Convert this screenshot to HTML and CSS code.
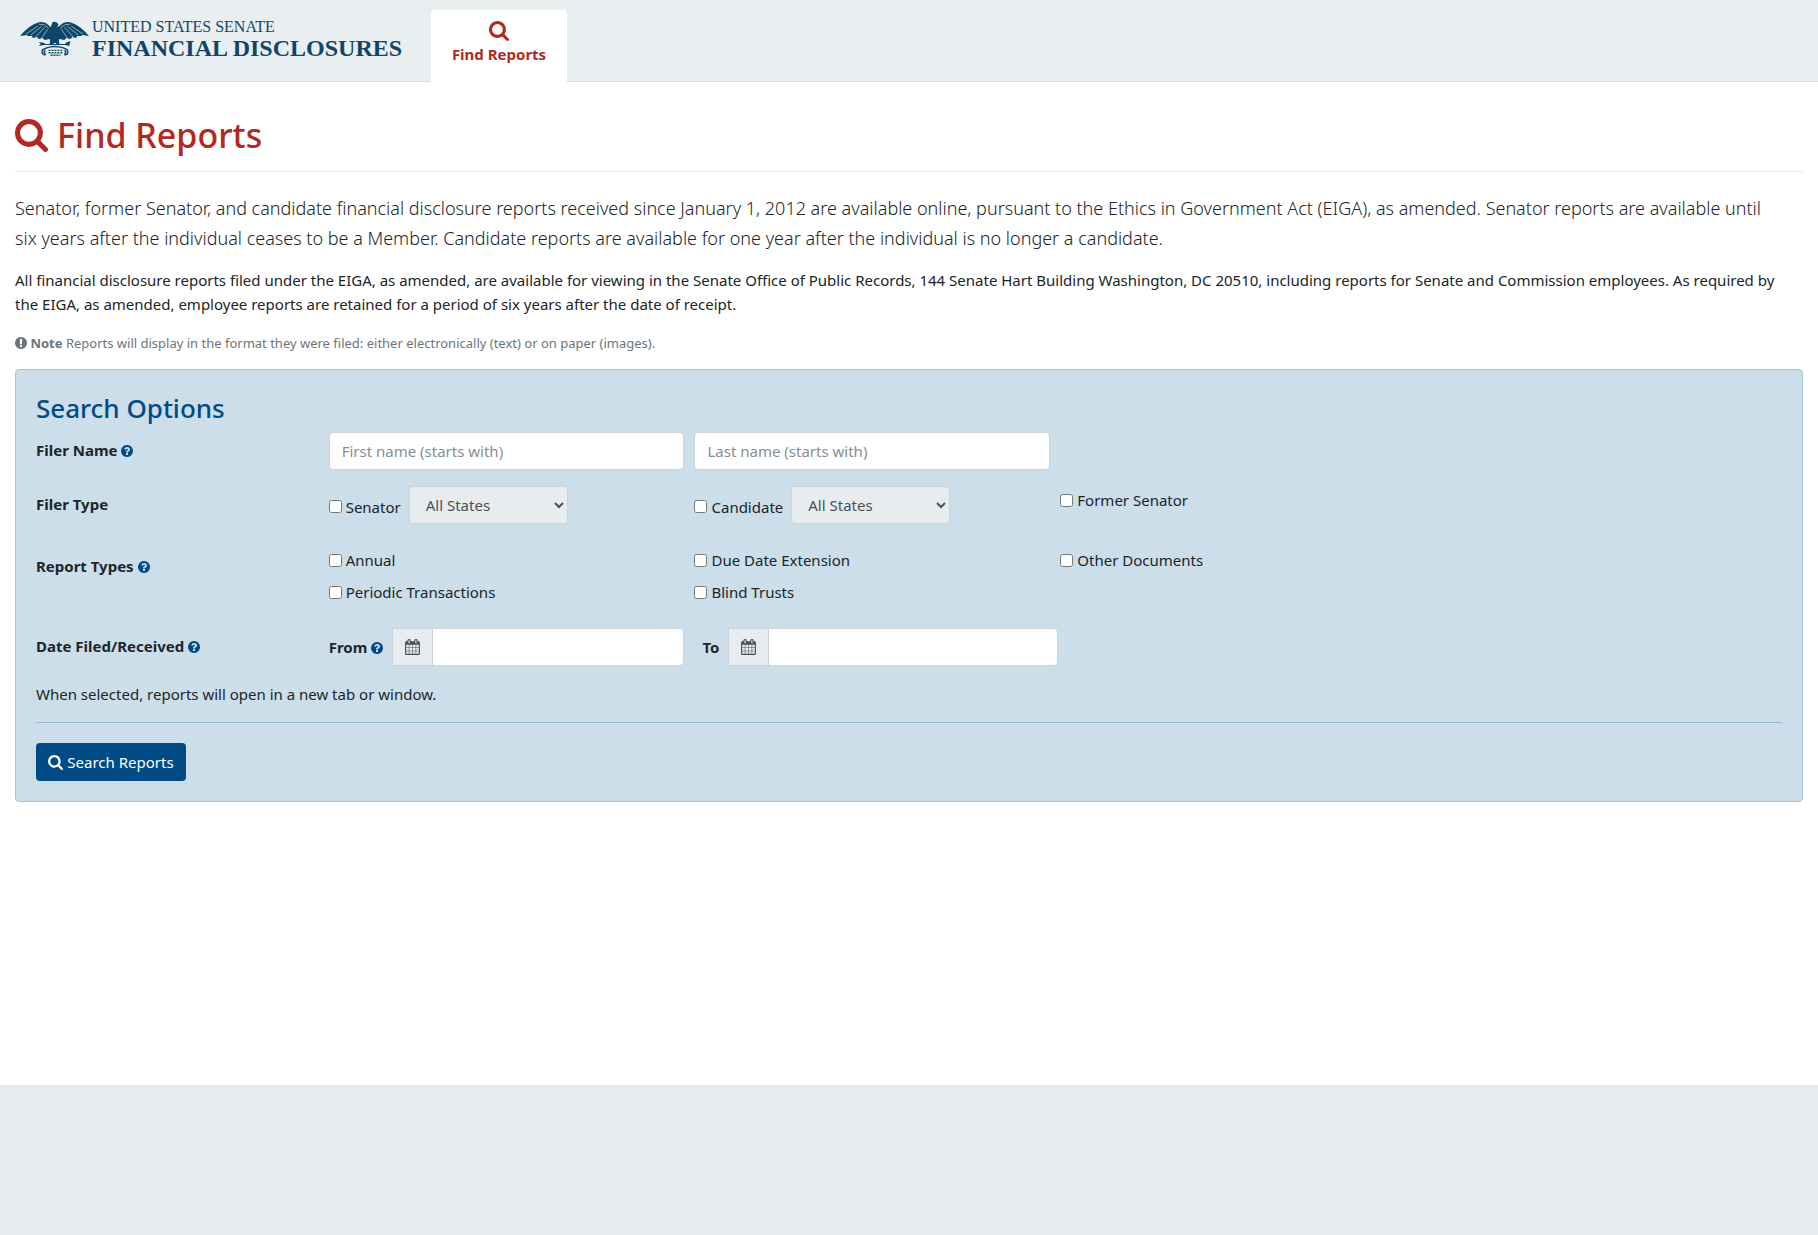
FILE: index.html
```html
<!DOCTYPE html>
<html lang="en">
<head>
<meta charset="utf-8">
<meta name="viewport" content="width=device-width, initial-scale=1">
<title>Find Reports - United States Senate Financial Disclosures</title>
<link rel="stylesheet" href="styles.css">
</head>
<body>
<svg class="sprite" aria-hidden="true">
  <symbol id="search" viewBox="64 128 1664 1664"><path d="M1216 832q0-185-131.500-316.500t-316.500-131.500-316.500 131.500-131.500 316.500 131.500 316.500 316.500 131.500 316.500-131.500 131.500-316.500zm512 832q0 52-38 90t-90 38q-54 0-90-38l-343-342q-179 124-399 124-143 0-273.500-55.500t-225-150-150-225-55.500-273.500 55.500-273.500 150-225 225-150 273.500-55.500 273.500 55.500 225 150 150 225 55.500 273.500q0 220-124 399l343 343q37 37 37 90z"/></symbol>
  <symbol id="question" viewBox="128 128 1536 1536"><path d="M1024 1376v-192q0-14-9-23t-23-9h-192q-14 0-23 9t-9 23v192q0 14 9 23t23 9h192q14 0 23-9t9-23zm256-672q0-88-55.500-163t-138.500-116-170-41q-243 0-371 213-15 24 8 42l132 100q7 6 19 6 16 0 25-12 53-68 86-92 34-24 86-24 48 0 85.500 26t37.500 59q0 38-20 61t-68 45q-63 28-115.500 86.500t-52.500 125.500v36q0 14 9 23t23 9h192q14 0 23-9t9-23q0-19 21.500-49.500t54.500-49.500q32-18 49-28.500t46-35 44.500-48 28-60.500 12.500-81zm384 192q0 209-103 385.500t-279.500 279.500-385.500 103-385.500-103-279.500-279.500-103-385.500 103-385.500 279.500-279.500 385.500-103 385.500 103 279.500 279.500 103 385.500z"/></symbol>
  <symbol id="exclamation" viewBox="128 128 1536 1536"><path d="M896 128q209 0 385.500 103t279.500 279.500 103 385.500-103 385.500-279.500 279.500-385.500 103-385.500-103-279.500-279.500-103-385.500 103-385.500 279.500-279.500 385.500-103zm128 1247v-190q0-14-9-23.500t-22-9.500h-192q-13 0-23 10t-10 23v190q0 13 10 23t23 10h192q13 0 22-9.500t9-23.500zm-2-344l18-621q0-12-10-18-10-8-24-8h-220q-14 0-24 8-10 6-10 18l17 621q0 10 10 17.500t24 7.500h185q14 0 23.500-7.500t10.500-17.500z"/></symbol>
  <symbol id="calendar" viewBox="64 0 1664 1792"><path d="M192 1664h288v-288h-288v288zm352 0h320v-288h-320v288zm-352-352h288v-320h-288v320zm352 0h320v-320h-320v320zm-352-384h288v-288h-288v288zm736 736h320v-288h-320v288zm-384-736h320v-288h-320v288zm768 736h288v-288h-288v288zm-384-352h320v-320h-320v320zm-352-864v-288q0-13-9.500-22.500t-22.500-9.500h-64q-13 0-22.500 9.500t-9.500 22.500v288q0 13 9.500 22.500t22.500 9.500h64q13 0 22.500-9.500t9.500-22.500zm736 864h288v-320h-288v320zm-384-384h320v-288h-320v288zm384 0h288v-288h-288v288zm32-480v-288q0-13-9.500-22.500t-22.500-9.500h-64q-13 0-22.500 9.500t-9.500 22.500v288q0 13 9.500 22.500t22.500 9.500h64q13 0 22.500-9.500t9.500-22.500zm384-64v1280q0 52-38 90t-90 38h-1408q-52 0-90-38t-38-90v-1280q0-52 38-90t90-38h128v-96q0-66 47-113t113-47h64q66 0 113 47t47 113v96h384v-96q0-66 47-113t113-47h64q66 0 113 47t47 113v96h128q52 0 90 38t38 90z"/></symbol>
</svg>

<header class="site-header">
  <a class="brand" href="#">
    <svg class="eagle" viewBox="0 0 70 36" aria-hidden="true">
      <g fill="currentColor">
        <path d="M0 15Q9 4 19 1Q25 0 29 4L31 6L33 1Q34 0 37 1L39 3L38 6L41 4Q45 0 51 1Q61 4 70 15L63 14L62 15L58 15L57 17L53 16L51 18L47 17L45 19L40 18L38 22H32L30 18L25 19L23 17L19 18L17 16L13 17L12 15L8 15L7 14Z"/>
        <path d="M31 18L30 23H34L35 20L37 23H40L39 18Z"/>
        <path d="M19 21L25 22V23H46V22L51 20L50 25L46 24H24L19 25L21 23Z"/>
      </g>
      <g fill="none" stroke="#e9eef0" stroke-width=".6">
        <path d="M6 13L18 5M11 14L22 5M16 16L25 6M22 17L28 8M64 13L52 5M59 14L48 5M54 16L45 6M48 17L42 8M19 3Q25 2 29 7M51 3Q45 2 41 7"/>
      </g>
      <g fill="none" stroke="currentColor">
        <path d="M27 27Q35 24 44 27L48 29Q50 34 45 34M27 27L23 29Q21 34 26 34M26 30Q23 30 26 34M45 30Q48 30 45 34" stroke-width="1.500"/>
        <path d="M29 29.500H43M29 32H43M31 34.500H41" stroke-width="1.400" stroke-dasharray="2 1"/>
      </g>
    </svg>
    <span class="brand-text"><span class="brand-top">UNITED STATES SENATE</span><span class="brand-main">FINANCIAL DISCLOSURES</span></span>
  </a>
  <nav class="tabs">
    <a class="tab" href="#"><svg class="icon icon-tab" aria-hidden="true"><use href="#search"/></svg>Find Reports</a>
  </nav>
</header>

<main class="content">
  <h1><svg class="icon icon-title" aria-hidden="true"><use href="#search"/></svg>Find Reports</h1>
  <p class="lead">Senator, former Senator, and candidate financial disclosure reports received since January 1, 2012 are available online, pursuant to the Ethics in Government Act (EIGA), as amended. Senator reports are available until six years after the individual ceases to be a Member. Candidate reports are available for one year after the individual is no longer a candidate.</p>
  <p class="about">All financial disclosure reports filed under the EIGA, as amended, are available for viewing in the Senate Office of Public Records, 144 Senate Hart Building Washington, DC 20510, including reports for Senate and Commission employees. As required by the EIGA, as amended, employee reports are retained for a period of six years after the date of receipt.</p>
  <p class="note"><svg class="icon icon-help" aria-hidden="true"><use href="#exclamation"/></svg> <strong>Note</strong> Reports will display in the format they were filed: either electronically (text) or on paper (images).</p>

  <form class="panel">
    <h2>Search Options</h2>
    <div class="row row-name">
      <div class="row-label">Filer Name <svg class="icon icon-help" aria-hidden="true"><use href="#question"/></svg></div>
      <div class="fields">
        <input class="control" type="text" aria-label="First name" placeholder="First name (starts with)">
        <input class="control" type="text" aria-label="Last name" placeholder="Last name (starts with)">
      </div>
    </div>
    <div class="row row-filer">
      <div class="row-label">Filer Type</div>
      <div class="fields">
        <div class="choice"><label class="check"><input type="checkbox">Senator</label>
          <select class="control state" aria-label="Senator state" disabled><option>All States</option></select></div>
        <div class="choice"><label class="check"><input type="checkbox">Candidate</label>
          <select class="control state" aria-label="Candidate state" disabled><option>All States</option></select></div>
        <label class="check former"><input type="checkbox">Former Senator</label>
      </div>
    </div>
    <div class="row row-reports">
      <div class="row-label">Report Types <svg class="icon icon-help" aria-hidden="true"><use href="#question"/></svg></div>
      <div class="fields reports">
        <label class="check"><input type="checkbox">Annual</label>
        <label class="check"><input type="checkbox">Due Date Extension</label>
        <label class="check other"><input type="checkbox">Other Documents</label>
        <label class="check"><input type="checkbox">Periodic Transactions</label>
        <label class="check"><input type="checkbox">Blind Trusts</label>
      </div>
    </div>
    <div class="row row-dates">
      <div class="row-label">Date Filed/Received <svg class="icon icon-help" aria-hidden="true"><use href="#question"/></svg></div>
      <div class="fields">
        <div class="date"><label for="from">From <svg class="icon icon-help" aria-hidden="true"><use href="#question"/></svg></label>
          <span class="addon"><svg class="icon icon-calendar" aria-hidden="true"><use href="#calendar"/></svg></span><input class="control" id="from" type="text"></div>
        <div class="date date-to"><label for="to">To</label>
          <span class="addon"><svg class="icon icon-calendar" aria-hidden="true"><use href="#calendar"/></svg></span><input class="control" id="to" type="text"></div>
      </div>
    </div>
    <p class="hint">When selected, reports will open in a new tab or window.</p>
    <hr>
    <button class="submit" type="button"><svg class="icon icon-button" aria-hidden="true"><use href="#search"/></svg>Search Reports</button>
  </form>
</main>
<footer class="site-footer"></footer>
</body>
</html>
```
FILE: styles.css
```css
*, *::before, *::after { box-sizing: border-box; }

body {
  margin: 0;
  min-height: 100vh;
  display: flex;
  flex-direction: column;
  background: #fff;
  color: #212529;
  font: 15px/24px "Noto Sans", "Open Sans", sans-serif;
}

h1, h2, p { margin: 0; }
.sprite { display: none; }
.icon { fill: currentColor; flex: none; }

.site-header {
  display: flex;
  height: 82px;
  padding-left: 20px;
  background: #e9eef0;
  border-bottom: 1px solid #dbe2e5;
}
.brand {
  display: flex;
  align-items: flex-start;
  gap: 3px;
  width: 411px;
  padding-top: 18px;
  color: #0f4668;
  font-family: "Liberation Serif", serif;
  text-decoration: none;
}
.eagle { width: 69px; height: 36px; margin-top: 3px; }
.brand-text { display: flex; flex-direction: column; white-space: nowrap; }
.brand-top { font-size: 16px; line-height: 18px; }
.brand-main { font-size: 24px; line-height: 24px; font-weight: 700; }
.tabs { display: flex; padding-top: 10px; margin-bottom: -1px; }
.tab {
  display: flex;
  flex-direction: column;
  align-items: center;
  gap: 1px;
  width: 136px;
  padding-top: 11px;
  background: #fff;
  border-radius: 4px 4px 0 0;
  color: #b22822;
  font-weight: 700;
  text-decoration: none;
}
.icon-tab { width: 20px; height: 20px; }

.content { flex: 1; padding: 32px 15px 0; }
h1 {
  display: flex;
  align-items: center;
  gap: 9px;
  padding-bottom: 14px;
  border-bottom: 1px solid #e9ecef;
  color: #b22822;
  font-size: 34px;
  line-height: 43px;
  font-weight: 500;
}
.icon-title { width: 33px; height: 33px; }
.lead, .about { padding-right: 20px; }
.lead { margin-top: 21px; font-size: 18px; line-height: 30px; font-weight: 300; }
.about { margin-top: 15px; }
.note { margin-top: 17px; color: #6c757d; font-size: 13px; line-height: 20px; }
.icon-help { width: 12px; height: 12px; vertical-align: -1px; }

.panel {
  margin-top: 16px;
  padding: 22px 20px 20px;
  background: #cbdee9;
  border: 1px solid #adc3cf;
  border-radius: 4px;
}
h2 { color: #004b85; font-size: 26px; line-height: 32px; font-weight: 500; }
.row { display: grid; grid-template-columns: repeat(12, 1fr); column-gap: 10px; }
.row-label { grid-column: span 2; font-weight: 700; white-space: nowrap; }
.row-label .icon, .date .icon-help { fill: #004b85; }
.fields { grid-column: span 10; display: grid; grid-template-columns: repeat(4, minmax(0, 1fr)); column-gap: 10px; }
.control {
  width: 100%;
  height: 38px;
  padding: 6px 12px;
  border: 1px solid #ced4da;
  border-radius: 4px;
  background: #fff;
  color: #495057;
  font: inherit;
}
.control::placeholder { color: #868e96; }
.row-name { margin-top: 8px; }
.row-name .row-label { padding-top: 6px; }
.row-filer { margin-top: 16px; }
.row-filer .row-label { padding-top: 6px; }
.choice { display: flex; align-items: center; gap: 8px; }
.choice .check { padding-top: 3px; }
.state { width: 159px; background: #e9ecef; opacity: 1; }
.check { display: flex; align-items: center; gap: 4px; white-space: nowrap; }
.check input { width: 13px; height: 13px; margin: 0; }
.former { align-self: start; padding-top: 2px; }
.row-reports { margin-top: 24px; }
.row-reports .row-label { padding-top: 6px; }
.reports { row-gap: 8px; }
.other { grid-column: span 2; }
.row-dates { margin-top: 24px; }
.row-dates .row-label { padding-top: 6px; }
.date { display: flex; align-items: center; }
.date label { margin-right: 9px; font-weight: 700; white-space: nowrap; }
.date-to { margin: 0 -8px 0 8px; }
.date .control { flex: 1; min-width: 0; border-radius: 0 4px 4px 0; }
.addon {
  display: flex;
  flex: none;
  align-items: center;
  justify-content: center;
  width: 40px;
  height: 38px;
  background: #e9ecef;
  border: 1px solid #ced4da;
  border-right: 0;
  color: #495057;
}
.icon-calendar { width: 15px; height: 16px; }
.hint { margin-top: 16px; }
hr { margin: 16px 0 20px; border: 0; border-top: 1px solid #91bad0; }
.submit {
  display: flex;
  align-items: center;
  justify-content: center;
  gap: 4px;
  width: 150px;
  height: 38px;
  padding: 0;
  border: 0;
  border-radius: 4px;
  background: #004b85;
  color: #fff;
  font: inherit;
}
.icon-button { width: 15px; height: 15px; }
.site-footer { height: 150px; background: #e7ebee; }
```
